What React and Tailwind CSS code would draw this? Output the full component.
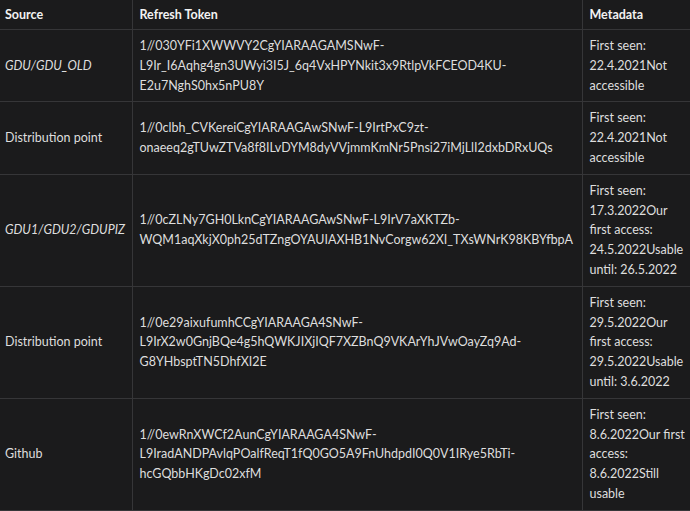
import React from "react";

const rows = [
  {
    source: "GDU/GDU_OLD",
    italic: true,
    token: [
      "1//030YFi1XWWVY2CgYIARAAGAMSNwF-",
      "L9Ir_I6Aqhg4gn3UWyi3I5J_6q4VxHPYNkit3x9RtlpVkFCEOD4KU-",
      "E2u7NghS0hx5nPU8Y",
    ],
    meta: ["First seen:", "22.4.2021Not", "accessible"],
  },
  {
    source: "Distribution point",
    token: [
      "1//0clbh_CVKereiCgYIARAAGAwSNwF-L9IrtPxC9zt-",
      "onaeeq2gTUwZTVa8f8ILvDYM8dyVVjmmKmNr5Pnsi27iMjLlI2dxbDRxUQs",
    ],
    meta: ["First seen:", "22.4.2021Not", "accessible"],
  },
  {
    source: "GDU1/GDU2/GDUPIZ",
    italic: true,
    token: [
      "1//0cZLNy7GH0LknCgYIARAAGAwSNwF-L9IrV7aXKTZb-",
      "WQM1aqXkjX0ph25dTZngOYAUIAXHB1NvCorgw62XI_TXsWNrK98KBYfbpA",
    ],
    meta: ["First seen:", "17.3.2022Our", "first access:", "24.5.2022Usable", "until: 26.5.2022"],
  },
  {
    source: "Distribution point",
    token: [
      "1//0e29aixufumhCCgYIARAAGA4SNwF-",
      "L9IrX2w0GnjBQe4g5hQWKJIXjIQF7XZBnQ9VKArYhJVwOayZq9Ad-",
      "G8YHbsptTN5DhfXI2E",
    ],
    meta: ["First seen:", "29.5.2022Our", "first access:", "29.5.2022Usable", "until: 3.6.2022"],
  },
  {
    source: "Github",
    token: [
      "1//0ewRnXWCf2AunCgYIARAAGA4SNwF-",
      "L9IradANDPAvlqPOalfReqT1fQ0GO5A9FnUhdpdI0Q0V1IRye5RbTi-",
      "hcGQbbHKgDc02xfM",
    ],
    meta: ["First seen:", "8.6.2022Our first", "access:", "8.6.2022Still", "usable"],
  },
];

function Lines({ lines }) {
  return lines.map((l, i) => (
    <div key={i} className="whitespace-nowrap">
      {l}
    </div>
  ));
}

export default function App() {
  return (
    <div
      className="w-[690px] h-[511px] overflow-hidden bg-[#1b1b1c] text-[#dedede] text-[12.5px] leading-[19.8px]"
      style={{ fontFamily: "Lato, 'Noto Sans', sans-serif" }}
    >
      <table className="table-fixed border-collapse w-[760px]">
        <colgroup>
          <col className="w-[132px]" />
          <col className="w-[450px]" />
          <col className="w-[178px]" />
        </colgroup>
        <thead>
          <tr className="border-b border-[#363638]">
            <th className="text-left font-bold text-[#f2f2f2] pt-[5px] pb-[4.2px] pl-[5px] pr-1.5 border-r border-[#363638]">
              Source
            </th>
            <th className="text-left font-bold text-[#f2f2f2] pt-[5px] pb-[4.2px] px-[7px] border-r border-[#363638]">
              Refresh Token
            </th>
            <th className="text-left font-bold text-[#f2f2f2] pt-[5px] pb-[4.2px] px-[7px] border-r border-[#363638]">
              Metadata
            </th>
          </tr>
        </thead>
        <tbody>
          {rows.map((r, i) => (
            <tr key={i} className="border-b border-[#363638]">
              <td
                className={`align-middle py-1.5 pl-[5px] pr-1.5 border-r border-[#363638] whitespace-nowrap ${
                  r.italic ? "italic" : ""
                }`}
              >
                {r.source}
              </td>
              <td className="align-middle py-1.5 px-[7px] border-r border-[#363638]">
                <Lines lines={r.token} />
              </td>
              <td className="align-middle py-1.5 px-[7px] border-r border-[#363638]">
                <Lines lines={r.meta} />
              </td>
            </tr>
          ))}
        </tbody>
      </table>
    </div>
  );
}
